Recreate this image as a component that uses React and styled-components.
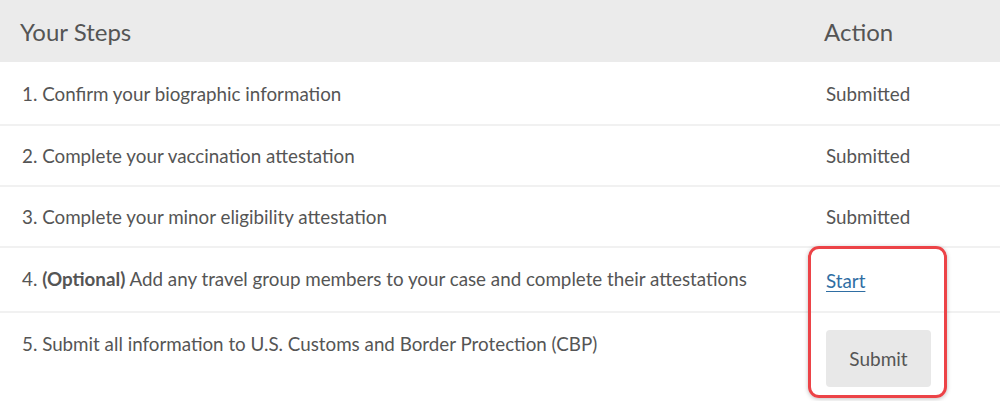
import React from 'react';
import styled, { createGlobalStyle } from 'styled-components';

const Global = createGlobalStyle`
  body {
    margin: 0;
    background: #fff;
    font-family: Lato, "Open Sans", sans-serif;
    color: #555;
  }
`;

const Table = styled.div`
  position: relative;
  width: 1000px;
  height: 401px;
  overflow: hidden;
`;

const HeadRow = styled.div`
  display: grid;
  grid-template-columns: 1fr 176px;
  align-items: center;
  height: 62px;
  background: #ebebeb;
  font-size: 24px;
  color: #555;
`;

const HeadCell = styled.div`
  padding-left: ${p => (p.$action ? '0' : '20px')};
`;

const Row = styled.div`
  display: grid;
  grid-template-columns: 1fr 176px;
  align-items: ${p => (p.$top ? 'start' : 'center')};
  height: ${p => p.$h}px;
  border-top: ${p => (p.$first ? 'none' : '2px solid #f1f1f1')};
  box-sizing: border-box;
  font-size: 18.8px;
  color: #555;
`;

const StepCell = styled.div`
  padding-left: 22px;
  padding-top: ${p => (p.$top ? '19px' : '0')};
  margin-top: ${p => (p.$lift ? '-3px' : '0')};
`;

const ActionCell = styled.div`
  padding-left: 2px;
  padding-top: ${p => (p.$top ? '17px' : '0')};
`;

const Start = styled.a`
  color: #2f6ea3;
  text-decoration: underline;
  text-underline-offset: 3px;
  cursor: pointer;
  position: relative;
  top: 1px;
`;

const SubmitButton = styled.button`
  width: 105px;
  height: 57px;
  border: none;
  border-radius: 4px;
  background: #e8e8e8;
  font-family: inherit;
  font-size: 19px;
  color: #555;
  cursor: pointer;
`;

const Highlight = styled.div`
  position: absolute;
  left: 808px;
  top: 246px;
  width: 139px;
  height: 152px;
  box-sizing: border-box;
  border: 3px solid #ec4347;
  border-radius: 11px;
  box-shadow: 0 1px 4px rgba(0, 0, 0, 0.25);
  pointer-events: none;
`;

const steps = [
  { text: '1. Confirm your biographic information', action: 'Submitted', h: 62 },
  { text: '2. Complete your vaccination attestation', action: 'Submitted', h: 61 },
  { text: '3. Complete your minor eligibility attestation', action: 'Submitted', h: 61 },
];

export default function App() {
  return (
    <>
      <Global />
      <Table>
        <HeadRow>
          <HeadCell>Your Steps</HeadCell>
          <HeadCell $action>Action</HeadCell>
        </HeadRow>
        {steps.map((s, i) => (
          <Row key={i} $h={s.h} $first={i === 0}>
            <StepCell>{s.text}</StepCell>
            <ActionCell>{s.action}</ActionCell>
          </Row>
        ))}
        <Row $h={65}>
          <StepCell $lift>
            4. <b>(Optional)</b> Add any travel group members to your case and complete their attestations
          </StepCell>
          <ActionCell>
            <Start>Start</Start>
          </ActionCell>
        </Row>
        <Row $h={95} $top>
          <StepCell $top>5. Submit all information to U.S. Customs and Border Protection (CBP)</StepCell>
          <ActionCell $top>
            <SubmitButton>Submit</SubmitButton>
          </ActionCell>
        </Row>
        <Highlight />
      </Table>
    </>
  );
}
